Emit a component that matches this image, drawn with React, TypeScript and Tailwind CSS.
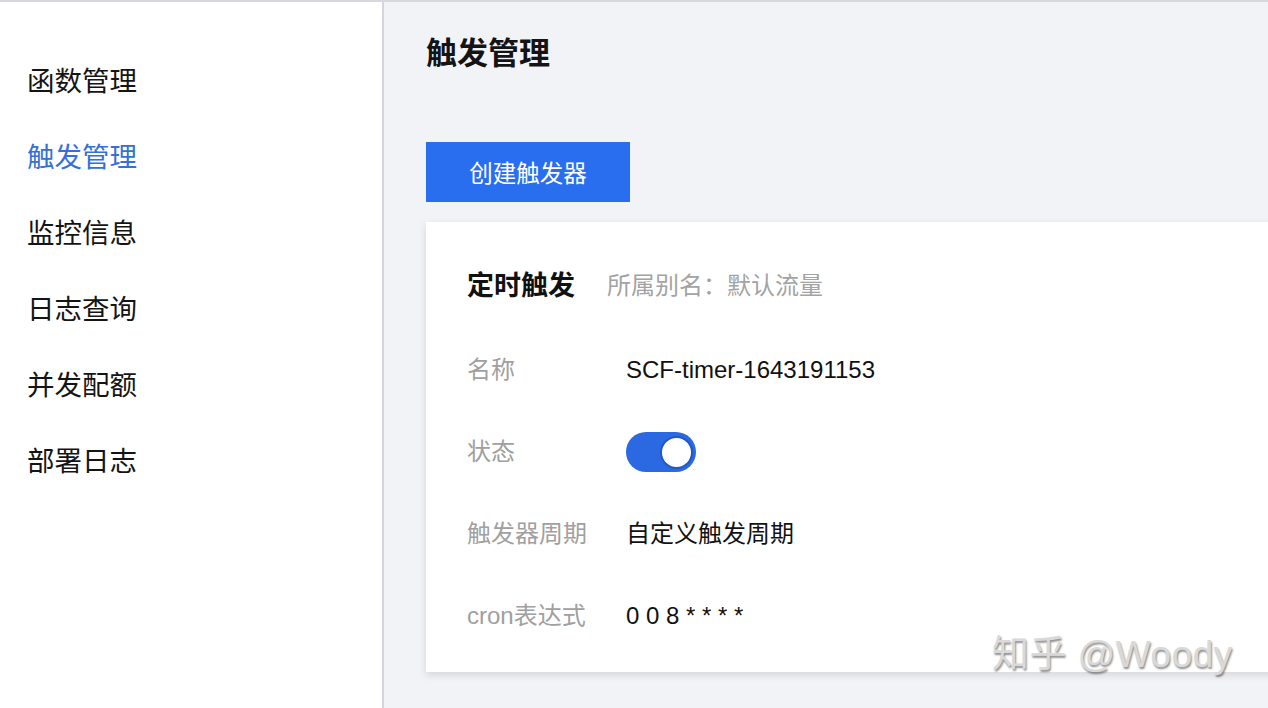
import React from "react";

const FONT = { fontFamily: '"Liberation Sans", "Noto Sans CJK SC", sans-serif' };

export default function App() {
  const nav = ["函数管理", "触发管理", "监控信息", "日志查询", "并发配额", "部署日志"];
  const rows: { label: string; value: React.ReactNode }[] = [
    { label: "名称", value: <span className="text-[24px] text-[#111]">SCF-timer-1643191153</span> },
    {
      label: "状态",
      value: (
        <div className="w-[70px] h-[40px] rounded-full bg-[#2a69e2] flex items-center justify-end pr-[3px]">
          <div className="w-[33px] h-[33px] rounded-full bg-white border-2 border-[#2258c4]" />
        </div>
      ),
    },
    { label: "触发器周期", value: <span className="text-[24px] text-[#111]">自定义触发周期</span> },
    { label: "cron表达式", value: <span className="text-[24px] text-[#111]">0 0 8 * * * *</span> },
  ];
  return (
    <div className="relative w-full h-[708px] flex border-t-2 border-[#d6d8de] overflow-hidden" style={FONT}>
      <aside className="w-[384px] shrink-0 bg-white border-r-2 border-[#d4d6de] pt-[42px] pl-[27px]">
        {nav.map((n, i) => (
          <div
            key={n}
            className={`h-[76px] leading-[76px] text-[27.5px] ${i === 1 ? "text-[#3371d6]" : "text-[#141414]"}`}
          >
            {n}
          </div>
        ))}
      </aside>
      <main className="flex-1 bg-[#f2f3f7] pl-[42px] pt-[32px] overflow-hidden">
        <h1 className="h-[40px] leading-[40px] text-[31px] font-bold text-[#141414]">触发管理</h1>
        <button className="mt-[68px] w-[204px] h-[60px] bg-[#2a6ef0] text-white text-[23.5px] flex items-center justify-center pt-[5px]">
          创建触发器
        </button>
        <section className="mt-[20px] mr-[-30px] h-[450px] bg-white shadow-[0_3px_8px_rgba(0,0,0,0.12)] pl-[41px] pt-[44px]">
          <div className="h-[40px] flex items-center">
            <span className="text-[27px] font-bold text-[#111]">定时触发</span>
            <span className="ml-[32px] text-[24px] text-[#a3a3a3]">所属别名：默认流量</span>
          </div>
          <div className="mt-[23px]">
            {rows.map((r) => (
              <div key={r.label} className="h-[82px] flex items-center">
                <span className="w-[159px] text-[24px] text-[#a0a0a0]">{r.label}</span>
                {r.value}
              </div>
            ))}
          </div>
        </section>
      </main>
      <div className="absolute left-[992px] top-[631px] text-[37px] leading-[44px] text-[#d9d9d9] [text-shadow:1px_2px_2px_rgba(0,0,0,0.45)] tracking-[0.5px]">
        知乎 @Woody
      </div>
    </div>
  );
}
